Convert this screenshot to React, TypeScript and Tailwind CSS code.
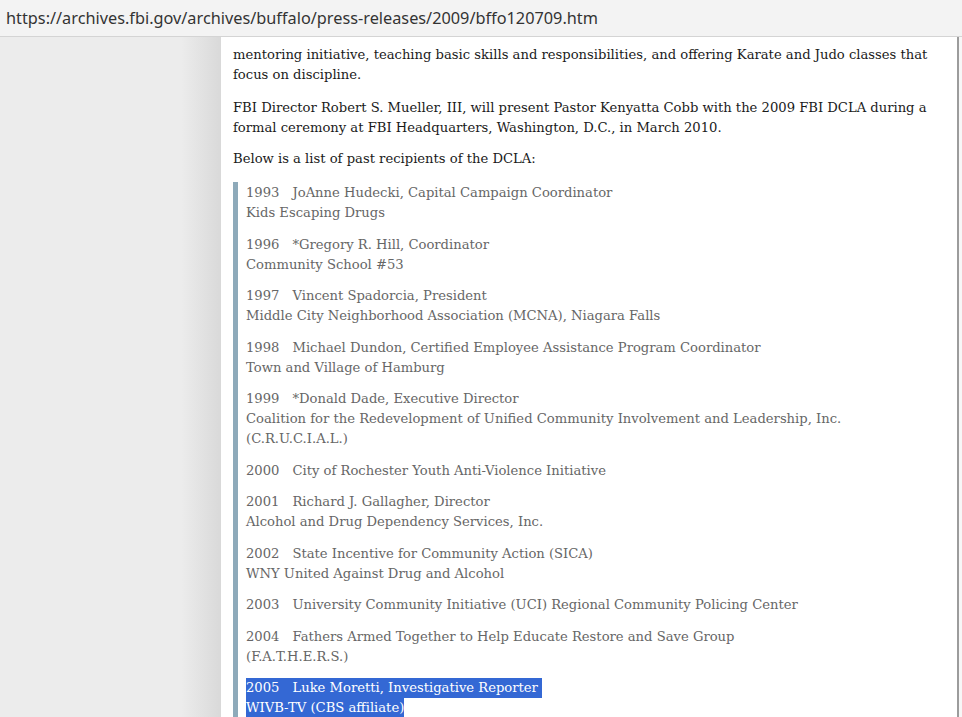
import React from 'react';

const serif = { fontFamily: '"DejaVu Serif", Georgia, serif' };

const recipients: { year: string; lines: string[] }[] = [
  { year: '1993', lines: ['JoAnne Hudecki, Capital Campaign Coordinator', 'Kids Escaping Drugs'] },
  { year: '1996', lines: ['*Gregory R. Hill, Coordinator', 'Community School #53'] },
  { year: '1997', lines: ['Vincent Spadorcia, President', 'Middle City Neighborhood Association (MCNA), Niagara Falls'] },
  { year: '1998', lines: ['Michael Dundon, Certified Employee Assistance Program Coordinator', 'Town and Village of Hamburg'] },
  {
    year: '1999',
    lines: [
      '*Donald Dade, Executive Director',
      'Coalition for the Redevelopment of Unified Community Involvement and Leadership, Inc.',
      '(C.R.U.C.I.A.L.)',
    ],
  },
  { year: '2000', lines: ['City of Rochester Youth Anti-Violence Initiative'] },
  { year: '2001', lines: ['Richard J. Gallagher, Director', 'Alcohol and Drug Dependency Services, Inc.'] },
  { year: '2002', lines: ['State Incentive for Community Action (SICA)', 'WNY United Against Drug and Alcohol'] },
  { year: '2003', lines: ['University Community Initiative (UCI) Regional Community Policing Center'] },
  { year: '2004', lines: ['Fathers Armed Together to Help Educate Restore and Save Group', '(F.A.T.H.E.R.S.)'] },
];

export default function App() {
  return (
    <div className="w-[962px] h-[717px] overflow-hidden flex flex-col bg-white">
      {/* address bar */}
      <div
        className="h-[37px] shrink-0 bg-[#f3f3f3] border-b border-[#d4d4d4] flex items-center px-[6px] text-[16.3px] text-[#333]"
        style={{ fontFamily: '"Noto Sans", "Open Sans", sans-serif' }}
      >
        https://archives.fbi.gov/archives/buffalo/press-releases/2009/bffo120709.htm
      </div>

      <div className="flex flex-1 min-h-0">
        <div className="w-[221px] shrink-0 bg-[linear-gradient(to_right,#ececec_82%,#d9d9d9)]" />

        <div
          className="w-[736px] shrink-0 bg-white pl-[12px] pt-[8px] text-[13.15px] leading-[20px] text-[#1a1a1a] whitespace-nowrap"
          style={serif}
        >
          <p>
            mentoring initiative, teaching basic skills and responsibilities, and offering Karate and Judo classes that
            <br />
            focus on discipline.
          </p>
          <p className="mt-[13px]">
            FBI Director Robert S. Mueller, III, will present Pastor Kenyatta Cobb with the 2009 FBI DCLA during a
            <br />
            formal ceremony at FBI Headquarters, Washington, D.C., in March 2010.
          </p>
          <p className="mt-[11px]">Below is a list of past recipients of the DCLA:</p>

          <div className="mt-[13px] border-l-[5px] border-[#8eaaba] pl-[8px] pt-[1px] text-[#666]">
            {recipients.map((r, i) => (
              <div key={r.year} className={i === 0 ? '' : 'mt-[11.5px]'}>
                <div>
                  {r.year}
                  <span className="ml-[13px]">{r.lines[0]}</span>
                </div>
                {r.lines.slice(1).map((l) => (
                  <div key={l}>{l}</div>
                ))}
              </div>
            ))}
            <div className="mt-[11.5px] text-white">
              <div>
                <span className="inline-block bg-[#3468d4] pr-[4px]">
                  2005<span className="ml-[13px]">Luke Moretti, Investigative Reporter</span>
                </span>
              </div>
              <div>
                <span className="inline-block bg-[#3468d4]">WIVB-TV (CBS affiliate)</span>
              </div>
            </div>
          </div>
        </div>

        <div className="w-[2px] shrink-0 bg-[#9c9c9c]" />
        <div className="flex-1 bg-[#f7f7f7]" />
      </div>
    </div>
  );
}
